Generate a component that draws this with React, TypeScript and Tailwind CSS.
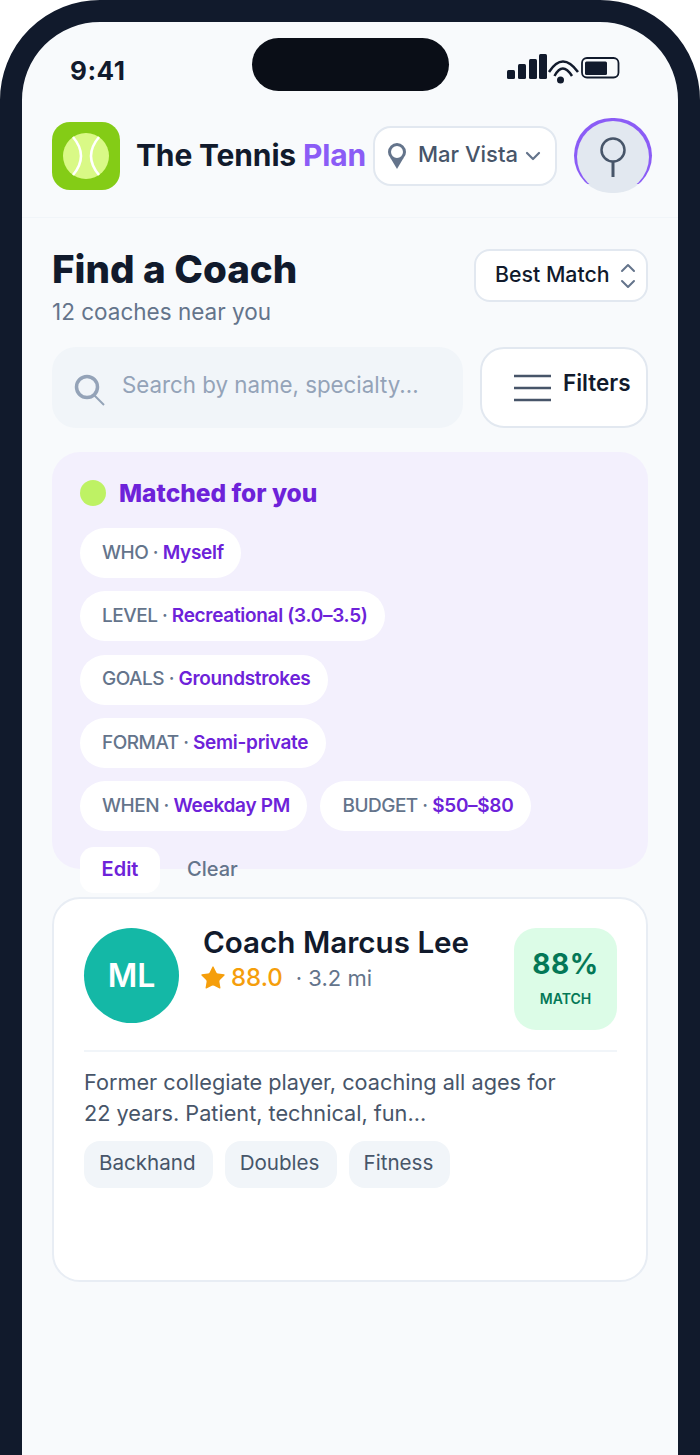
import { ChevronDown, ChevronUp, Star } from 'lucide-react';

function Chip({ label, value }: { label: string; value: string }) {
  return (
    <div className="h-[50px] pl-[22px] pr-[17.5px] rounded-full bg-white flex items-center text-[19px] font-medium text-[#64748b] whitespace-nowrap">
      <span className="tracking-[-0.5px]">{label} ·&nbsp;</span>
      <span className="font-semibold tracking-[-0.3px] text-[#6d22d9]">{value}</span>
    </div>
  );
}

function Tag({ children }: { children: string }) {
  return (
    <div className="h-[47px] pb-[2px] pl-[15px] pr-[17px] rounded-[16px] bg-[#f1f5f9] flex items-center text-[20.6px] text-[#475569]">
      {children}
    </div>
  );
}

export default function App() {
  return (
    <div className="w-[700px] h-[1455px] overflow-hidden bg-white font-['Inter',sans-serif]">
      <div className="w-[700px] h-[1560px] rounded-[100px] border-[22px] border-[#111a2c] bg-[#f8fafc]">
        {/* Status bar */}
        <div className="h-[78px] pl-[48px] pt-[16px] flex">
          <span className="w-[182px] mt-[15px] text-[26px] leading-[36px] font-bold tracking-[0.5px] text-[#111a2c]">9:41</span>
          <div className="w-[197px] h-[53px] rounded-full bg-[#0a0e17]" />
          <svg width="114" height="32" viewBox="0 0 114 32" className="ml-[58px] mt-[16px]">
            <rect x="0" y="16" width="8" height="9" rx="1.5" fill="#111a2c" />
            <rect x="11" y="10" width="8" height="15" rx="1.5" fill="#111a2c" />
            <rect x="22" y="5" width="8" height="20" rx="1.5" fill="#111a2c" />
            <rect x="32" y="0" width="8" height="25" rx="1.5" fill="#111a2c" />
            <path d="M42 18 Q55.500 -3 71 18 M47.500 22 Q55.500 7 65 22" fill="none" stroke="#111a2c" strokeWidth="2.500" />
            <circle cx="53.500" cy="26" r="3.500" fill="#111a2c" />
            <rect x="75" y="4" width="36.500" height="19.500" rx="5" fill="none" stroke="#111a2c" strokeWidth="1.800" />
            <rect x="78" y="7.500" width="22" height="13.500" rx="1.500" fill="#111a2c" />
          </svg>
        </div>

        {/* Header */}
        <div className="h-[118px] pl-[30px] pb-[6px] flex items-center border-b border-[#f1f5f9]">
          <div className="w-[68px] h-[68px] rounded-[18px] bg-[#84cc16] flex items-center justify-center shrink-0">
            <svg width="46" height="46" viewBox="0 0 46 46">
              <circle cx="23" cy="23" r="23" fill="#d9f986" />
              <path d="M10 4 Q26 23 10 42 M36 4 Q20 23 36 42" fill="none" stroke="#ffffff" strokeWidth="2.500" />
            </svg>
          </div>
          <div className="ml-[16px] text-[30px] font-bold text-[#111a2c] whitespace-nowrap tracking-[-0.15px]">
            The Tennis <span className="text-[#8b5cf6]">Plan</span>
          </div>
          <div className="ml-[7px] w-[184px] h-[60px] shrink-0 rounded-[18px] border-2 border-[#e2e8f0] bg-white flex items-center pl-[13px] text-[22px] font-medium text-[#475569]">
            <svg width="18" height="26" viewBox="0 0 18 26" className="mr-[12px] mt-[1px]">
              <circle cx="9" cy="9" r="7.500" fill="none" stroke="#64748b" strokeWidth="3" />
              <path d="M2.500 15 L9 26 L15.500 15 Z" fill="#64748b" />
            </svg>
            <span className="-mt-[2px]">Mar Vista</span>
            <ChevronDown size={24} strokeWidth={2.2} className="ml-[3px] text-[#64748b]" />
          </div>
          {/* purple ring only shows down to about 7/8 of the height */}
          <div className="ml-[17px] w-[78px] h-[75px] shrink-0 rounded-full pt-[3px] px-[3px] bg-[linear-gradient(#8b5cf6_88%,#e2e8f0_88%)]">
            <div className="w-[72px] h-[72px] rounded-full bg-[#e2e8f0] flex items-center justify-center">
              <svg width="28" height="40" viewBox="0 0 28 40">
                <circle cx="14" cy="13" r="11.500" fill="none" stroke="#475569" strokeWidth="2.500" />
                <path d="M14 25 V40" stroke="#475569" strokeWidth="3" />
              </svg>
            </div>
          </div>
        </div>

        <div className="px-[30px]">
          {/* Title row */}
          <div className="pt-[30px] flex justify-between items-start">
            <div>
              <h1 className="text-[38.6px] leading-[42px] font-extrabold text-[#111a2c]">Find a Coach</h1>
              <p className="mt-[6px] text-[22.5px] leading-[32px] text-[#64748b]">12 coaches near you</p>
            </div>
            <div className="mt-[1px] w-[174px] h-[53px] rounded-[16px] border-2 border-[#e2e8f0] bg-white flex items-center pl-[19px] text-[21.3px] font-medium text-[#111a2c] whitespace-nowrap">
              <span className="-mt-[2px]">Best Match</span>
              <div className="ml-[6px] flex flex-col text-[#64748b]">
                <ChevronUp size={24} strokeWidth={2} className="-mb-[4px]" />
                <ChevronDown size={24} strokeWidth={2} className="-mt-[4px]" />
              </div>
            </div>
          </div>

          {/* Search */}
          <div className="mt-[19px] flex gap-[17px]">
            <div className="w-[411px] h-[81px] rounded-[24px] bg-[#f1f5f9] flex items-center pl-[22px] text-[22.3px] text-[#94a3b8]">
              <svg width="32" height="32" viewBox="0 0 32 32" className="mr-[16px] mt-[4px]">
                <circle cx="13" cy="13" r="10.500" fill="none" stroke="#94a3b8" strokeWidth="3.500" />
                <path d="M20 21 L30 31" stroke="#94a3b8" strokeWidth="2" />
              </svg>
              <span className="-mt-[5px]">Search by name, specialty...</span>
            </div>
            <div className="w-[168px] h-[81px] rounded-[24px] border-2 border-[#e2e8f0] bg-white flex items-center pl-[32px] text-[22.5px] font-semibold text-[#111a2c]">
              <svg width="37" height="28" viewBox="0 0 37 28" className="mr-[12px]">
                <path d="M0 2 H37 M0 14 H37 M0 26 H37" stroke="#475569" strokeWidth="2.500" />
              </svg>
              <span className="-mt-[10px]">Filters</span>
            </div>
          </div>

          {/* Matched panel */}
          <div className="mt-[24px] h-[417px] rounded-[28px] bg-[#f3f0fd] pl-[28px] pt-[28px]">
            <div className="flex items-center gap-[13px] h-[26px]">
              <div className="w-[26px] h-[26px] rounded-full bg-[#bef264]" />
              <span className="text-[24.5px] font-extrabold text-[#6d22d9] mt-[1px]">Matched for you</span>
            </div>
            <div className="mt-[22px] flex flex-col gap-[13.25px] items-start">
              <Chip label="WHO" value="Myself" />
              <Chip label="LEVEL" value="Recreational (3.0–3.5)" />
              <Chip label="GOALS" value="Groundstrokes" />
              <Chip label="FORMAT" value="Semi-private" />
              <div className="flex gap-[13px]">
                <Chip label="WHEN" value="Weekday PM" />
                <Chip label="BUDGET" value="$50–$80" />
              </div>
            </div>
            <div className="mt-[16px] flex items-center text-[20px]">
              <div className="w-[80px] h-[46px] pb-[2px] rounded-[14px] bg-white flex items-center justify-center font-semibold text-[#6d22d9]">Edit</div>
              <div className="ml-[27px] -mt-[2px] font-medium text-[#64748b]">Clear</div>
            </div>
          </div>

          {/* Coach card */}
          <div className="mt-[28px] h-[385px] rounded-[28px] border-2 border-[#e8edf4] bg-white pl-[30px] pr-[29px] pt-[29px]">
            <div className="flex items-start">
              <div className="w-[95px] h-[95px] rounded-full bg-[#14b8a6] flex items-center justify-center text-[32px] font-semibold text-white shrink-0">ML</div>
              <div className="ml-[24px] flex-1">
                <div className="-mt-[2px] text-[29.6px] leading-[32px] font-semibold text-[#111a2c] whitespace-nowrap">Coach Marcus Lee</div>
                <div className="mt-[4px] -ml-[4px] flex items-center h-[32px]">
                  <Star size={28} fill="#f59e0b" strokeWidth={0} className="text-[#f59e0b]" />
                  <span className="ml-[4px] text-[24px] font-medium text-[#f59e0b]">88.0</span>
                  <span className="ml-[13px] text-[22px] text-[#64748b]">· 3.2 mi</span>
                </div>
              </div>
              <div className="w-[103px] h-[102px] pb-[5px] rounded-[22px] bg-[#dcfce7] flex flex-col items-center justify-center shrink-0">
                <span className="text-[28px] leading-[36px] font-bold text-[#047857] tracking-[0.5px]">88%</span>
                <span className="mt-[8px] text-[14px] leading-[18px] font-semibold text-[#047857]">MATCH</span>
              </div>
            </div>
            <div className="mt-[20px] h-[2px] bg-[#f1f5f9]" />
            <p className="mt-[15px] text-[21.7px] leading-[31px] text-[#475569]">
              Former collegiate player, coaching all ages for<br />22 years. Patient, technical, fun...
            </p>
            <div className="mt-[12px] flex gap-[12px]">
              <Tag>Backhand</Tag>
              <Tag>Doubles</Tag>
              <Tag>Fitness</Tag>
            </div>
          </div>
        </div>
      </div>
    </div>
  );
}
